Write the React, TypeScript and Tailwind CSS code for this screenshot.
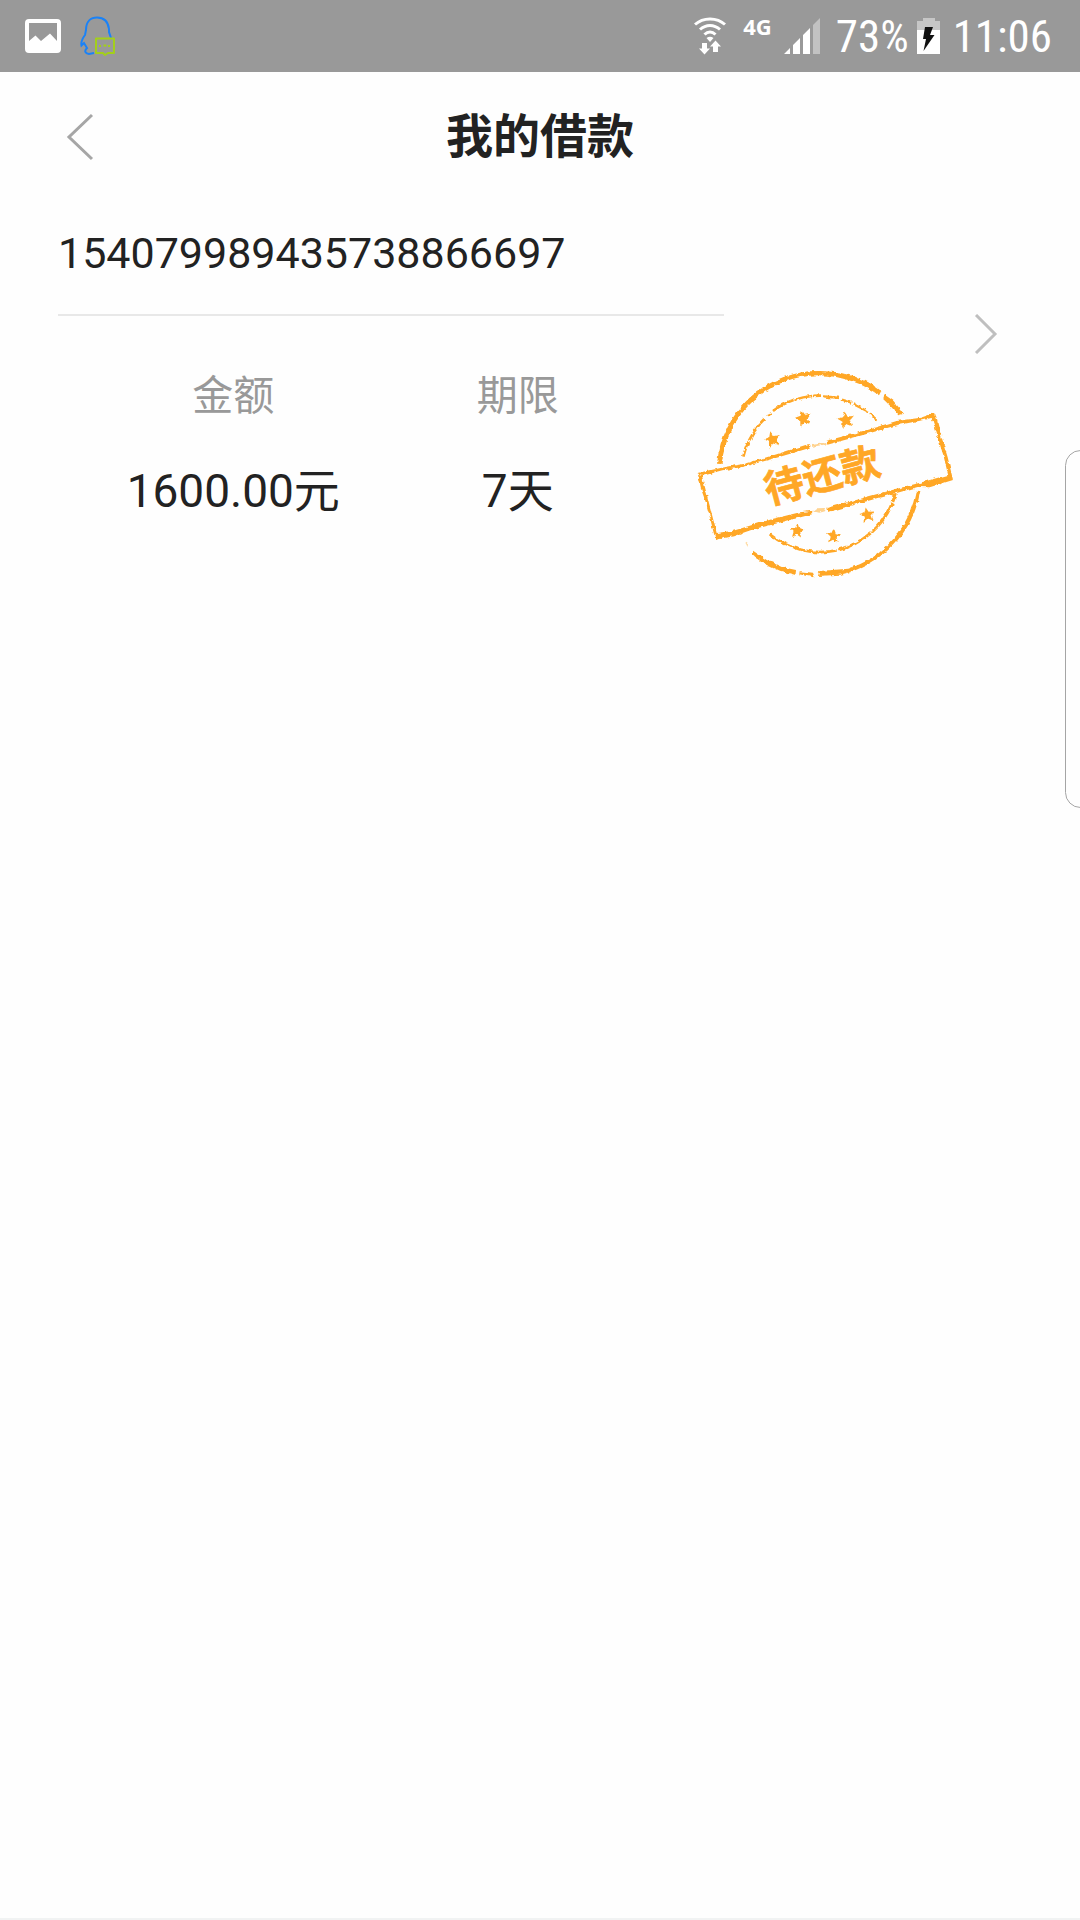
import type { ReactNode } from "react";

const LOAN = {
  orderNo: "154079989435738866697",
  fields: [
    { label: "金额", value: "1600.00元" },
    { label: "期限", value: "7天" },
  ],
  status: "待还款",
};

const STARS = [
  { x: 277, y: 269, r: 26, turn: -14 },
  { x: 371, y: 205, r: 26, turn: -14 },
  { x: 498, y: 210, r: 26, turn: -10 },
  { x: 351, y: 543, r: 23, turn: 4 },
  { x: 460, y: 558, r: 24, turn: 4 },
  { x: 561, y: 495, r: 23, turn: -10 },
];

function PictureIcon() {
  return (
    <svg viewBox="0 0 36 34" className="h-[34px] w-9" fill="#fff" aria-hidden="true">
      <path
        fillRule="evenodd"
        d="M4 0H32Q36 0 36 4V30Q36 34 32 34H4Q0 34 0 30V4Q0 0 4 0ZM4 4V22L10.500 16.500L16 22L25 14.500L32 22V4Z"
      />
    </svg>
  );
}

function MessengerIcon() {
  return (
    <svg viewBox="0 0 36 40" className="h-10 w-9" fill="none" aria-hidden="true">
      <path
        d="M31 22L29 16V13C28 5 23 1.500 17 1.500S6 5 6 14L5 19C2 23 1 27 1.500 29.500L4 27L7 32C4 35 5 37.500 9 38L14 37"
        stroke="#1a82f7"
        strokeWidth="2"
      />
      <path d="M16 22.500H34V37H28L25 39L23 37H16Z" stroke="#a3cf1b" strokeWidth="2" strokeLinejoin="round" />
      <path d="M19 30H21M23.500 29.500H26.500M28 30H30" stroke="#a3cf1b" strokeWidth="2" />
    </svg>
  );
}

function WifiIcon() {
  return (
    <svg viewBox="0 0 32 38" className="h-[38px] w-8" fill="none" stroke="#fff" aria-hidden="true">
      <path d="M1 7.500C9 0 23 0 31 7.500" strokeWidth="3" />
      <path d="M6 12.500C12 7 20 7 26 12.500" strokeWidth="3" />
      <path d="M10.500 17.500C14 14 18 14 21.500 17.500" strokeWidth="3" />
      <path d="M12.500 21Q16 18.500 19.500 21L16 25Z" fill="#fff" stroke="none" />
      <path
        d="M8 26H13V31.500H16L10.500 37.500L5 31.500H8ZM19 35V29.500H16L21.500 23.500L27 29.500H24V35Z"
        fill="#fff"
        stroke="none"
      />
    </svg>
  );
}

function SignalIcon() {
  return (
    <svg viewBox="0 0 36 36" className="size-9" fill="#fff" aria-hidden="true">
      <path d="M0 36L6 30V36ZM9 27L16 20V36H9ZM19 17L26 10V36H19Z" />
      <path d="M29 7L36 0V36H29Z" opacity="0.4" />
    </svg>
  );
}

function BatteryIcon() {
  return (
    <svg viewBox="0 0 24 36" className="h-9 w-6" aria-hidden="true">
      <path d="M6 0H18V3H23V12H0V3H6Z" fill="#c6c6c6" />
      <path d="M0 12H23V36H0Z" fill="#fff" />
      <path d="M8 9H16L13 17H17.500L6.500 33L9 21H6Z" fill="#111" />
    </svg>
  );
}

function StatusBar() {
  return (
    <div className="flex h-[72px] items-center bg-[#999] pr-7 pl-[25px] text-white">
      <PictureIcon />
      <div className="ml-[19px]">
        <MessengerIcon />
      </div>
      <div className="ml-auto flex items-center">
        <WifiIcon />
        <span className="mr-3 ml-[17px] pb-5 font-['Open_Sans','Noto_Sans',sans-serif] text-[22px] leading-7 font-bold">
          4G
        </span>
        <SignalIcon />
        <span className="ml-4 pt-0.5 font-['Roboto_Condensed',Roboto,sans-serif] text-[45px] leading-[52px]">73%</span>
        <span className="mx-2">
          <BatteryIcon />
        </span>
        <span className="ml-1 pt-0.5 font-['Roboto_Condensed',Roboto,sans-serif] text-[45px] leading-[52px]">
          11:06
        </span>
      </div>
    </div>
  );
}

function IconButton({ label, className, children }: { label: string; className: string; children: ReactNode }) {
  return (
    <button type="button" aria-label={label} className={`flex items-center justify-center ${className}`}>
      {children}
    </button>
  );
}

function Star({ x, y, r, turn }: { x: number; y: number; r: number; turn: number }) {
  return (
    <path
      d="M0 -1L.27 -.37L.95 -.31L.44 .14L.59 .81L0 .46L-.59 .81L-.44 .14L-.95 -.31L-.27 -.37Z"
      transform={`translate(${x} ${y}) rotate(${turn}) scale(${r})`}
    />
  );
}

function Stamp({ text }: { text: string }) {
  return (
    <svg viewBox="0 0 870 720" className="h-60 w-[290px] shrink-0" fill="#ffa726" role="img" aria-label={text}>
      {/* worn ink edges */}
      <filter id="ink" x="0" y="0" width="870" height="720" filterUnits="userSpaceOnUse">
        <feTurbulence type="fractalNoise" baseFrequency="0.07" numOctaves="2" seed="4" />
        <feDisplacementMap in="SourceGraphic" scale="12" xChannelSelector="R" yChannelSelector="G" />
      </filter>
      <g filter="url(#ink)">
        {/* outer ring, thicker where the ink is heavier */}
        <path d="M111 341A304 309 0 0 1 420 63C500 64 560 88 604 122L597 136C550 102 490 78 415 76A292 298 0 0 0 125 342Z" />
        <path d="M611 132L640 152L672 191L655 196L634 171L607 145Z" />
        <path d="M708 422L721 423A308 308 0 0 1 480 674L414 678L418 663L505 656A298 298 0 0 0 708 422Z" />
        <path d="M219 602L260 630L305 651L348 660L347 675L300 662L252 640L219 614ZM359 664L399 668L404 682L380 678L358 673Z" />
        <path d="M196 578L205 580L203 591Z" opacity="0.4" />
        {/* inner ring */}
        <g fill="none" stroke="#ffa726">
          <path d="M190 320A233 236 0 0 1 253 207" strokeWidth="8" strokeDasharray="48 3 60 2" />
          <path d="M260 197L275 190M279 183A236 236 0 0 1 423 137" strokeWidth="8" strokeDasharray="70 3 54 4" />
          <path d="M431 139L480 144M486 149L514 158M521 163L562 184M567 189L593 212" strokeWidth="7" />
          <path d="M269 553A240 240 0 0 0 470 601" strokeWidth="8" />
          <path d="M475 600A238 238 0 0 0 646 432" strokeWidth="9" strokeDasharray="110 3" />
        </g>
        {/* ribbon */}
        <path d="M52 369L118 355L158 347L190 342L290 313L386 282L389 294L290 323L192 350L130 361L66 378Z" />
        <path d="M393 282L438 276L440 283L394 291Z" opacity="0.5" />
        <path d="M440 272L560 240L650 213L722 203L763 189L766 201L720 212L650 226L560 252L442 284Z" />
        <path d="M752 194L766 190L781 249L803 322L819 389L806 382L790 315L782 291L770 250Z" />
        <path d="M806 374L819 390L749 412L713 411L650 429L560 454L445 486L442 473L550 443L640 419L720 398Z" />
        <path d="M399 484L410 475L438 474L435 484L418 488Z" opacity="0.5" />
        <path d="M397 482L396 493L310 515L220 538L160 559L105 570L104 550L160 542L280 506L360 487Z" />
        <path d="M54 374L66 378L78 424L91 475L110 549L108 567L101 548L88 496L76 453L64 419Z" />
        {STARS.map((star) => (
          <Star key={`${star.x}-${star.y}`} {...star} />
        ))}
      </g>
      <text
        x="426"
        y="419"
        transform="rotate(-15 426 376)"
        textAnchor="middle"
        stroke="#ffa726"
        strokeWidth="2"
        className="font-['Noto_Sans_CJK_SC',sans-serif] text-[118px] font-bold"
      >
        {text}
      </text>
    </svg>
  );
}

function LoanCard() {
  return (
    <article className="flex pl-[58px]">
      <div className="flex-1">
        <p className="w-[73%] border-b-2 border-[#e8e8e8] pt-[22px] pb-8 text-[43px] leading-[58px]">{LOAN.orderNo}</p>
        <div className="flex pt-[34px]">
          <dl className="grid flex-1 grid-cols-2 pr-5 pl-[33px] text-center">
            {LOAN.fields.map((field) => (
              <div key={field.label}>
                <dt className="pt-4 text-[41px] leading-[60px] text-[#999]">{field.label}</dt>
                <dd className="pt-8 text-[46px] leading-[66px]">{field.value}</dd>
              </div>
            ))}
          </dl>
          <Stamp text={LOAN.status} />
        </div>
      </div>
      <IconButton label="查看详情" className="mt-[110px] mr-[78px] h-11 w-8">
        <svg viewBox="0 0 24 40" className="h-10 w-6" fill="none" stroke="#bfbfbf" strokeWidth="3" aria-hidden="true">
          <path d="M2 1L21 20L2 39" />
        </svg>
      </IconButton>
    </article>
  );
}

export default function App() {
  return (
    <div className="relative flex min-h-screen flex-col overflow-hidden border-b-2 border-[#f1f3f3] bg-[#fefefe] font-[Roboto,'Noto_Sans_CJK_SC',sans-serif] text-[#222]">
      <StatusBar />
      <header className="grid h-[130px] grid-cols-[160px_1fr_160px] items-center">
        <IconButton label="返回" className="h-full">
          <svg viewBox="0 0 28 48" className="h-12 w-7" fill="none" stroke="#a6a6a6" strokeWidth="3" aria-hidden="true">
            <path d="M26 2L3 24L26 46" />
          </svg>
        </IconButton>
        <h1 className="text-center text-[47px] leading-[66px] font-bold">我的借款</h1>
      </header>
      <main className="flex-1">
        <LoanCard />
      </main>
      {/* edge panel handle */}
      <div className="absolute top-[450px] -right-4 h-[358px] w-[31px] rounded-[20px] border border-[#a5a5a5]" />
    </div>
  );
}
